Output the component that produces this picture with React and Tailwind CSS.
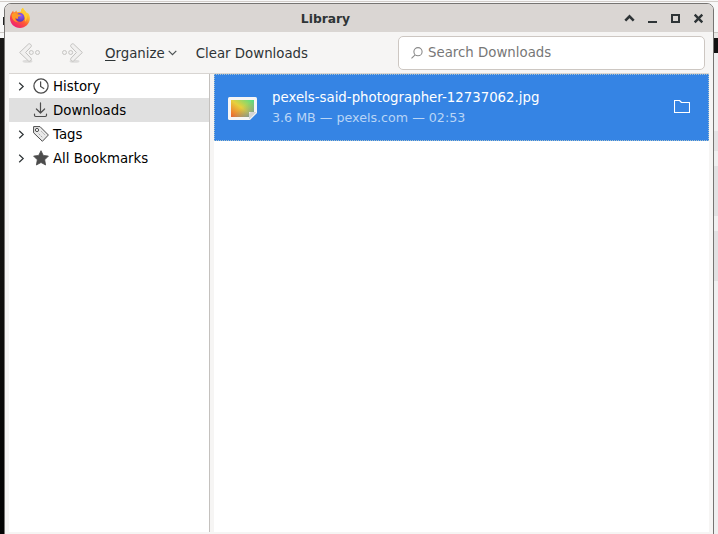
import React from 'react';

function Firefox() {
  return (
    <svg className="h-[22px] w-[22px] shrink-0" viewBox="0 0 22 22">
      <defs>
        <linearGradient id="fox" x1="0.85" y1="0.05" x2="0.2" y2="0.95">
          <stop offset="0" stopColor="#fff04a" />
          <stop offset="0.3" stopColor="#ffb52c" />
          <stop offset="0.58" stopColor="#ff5a35" />
          <stop offset="1" stopColor="#ed1c78" />
        </linearGradient>
        <radialGradient id="globe" cx="0.6" cy="0.3" r="0.7">
          <stop offset="0" stopColor="#9a5bf5" />
          <stop offset="1" stopColor="#5239b4" />
        </radialGradient>
      </defs>
      <path fill="url(#fox)" d="M2.9 5.2 4.2 3.6 4.7 5.5 6 5 7.4 3.4 8 5.3C9.6 4.6 11 4.5 12 4.8 11.8 3 12.5 1.5 14 .7 14.6 3 16.8 4 18 6.2L18.7 5.8C20.3 7.5 21 9.5 20.9 11.6 20.6 17 16.4 21 11 21 5.4 21 1 16.7 1 11.3 1 9 1.7 7 2.9 5.2Z" />
      <circle cx="11.1" cy="10.4" r="4.4" fill="url(#globe)" />
      <path fill="#ff9a26" d="M2.6 7.2C4.6 5.5 7.3 5.8 8.7 7.3L12 7.9C11.9 9 10.2 9.2 9.4 9.6 8.6 10.1 9 10.9 9.4 11.4 7.8 12.2 6.9 11.6 6.3 10.5 5.8 12.6 7.2 14.6 9.4 15.2 5 15.4 2.4 11.6 2.6 7.2Z" />
      <path fill="#ffcb35" d="M12.2 4.8C12.1 3.2 12.7 1.8 14 .7 14.4 3.2 17.4 4.5 18 8.2 18.3 11 17.5 13 16 14.7 16.7 11.5 15.7 8.3 12.2 4.8Z" />
    </svg>
  );
}

function NavArrow({ flip }) {
  return (
    <svg className={flip ? 'h-6 w-6 -scale-x-100' : 'h-6 w-6'} viewBox="0 0 24 24">
      <ellipse cx="9.5" cy="20.2" rx="5" ry="1.5" fill="#000" opacity="0.1" />
      <path d="M10.5 3 1.6 11.5 10.5 20Q11.8 20.7 12.8 19.5 13.9 18.4 13 17.2L7.6 11.5 13 5.8Q13.9 4.6 12.8 3.5 11.8 2.3 10.5 3Z" fill="#f1f0ef" stroke="#c3c2c0" />
      <circle cx="13.3" cy="11.5" r="2" fill="#f3f2f1" stroke="#c6c5c3" />
      <circle cx="19.5" cy="11.5" r="2" fill="#f3f2f1" stroke="#c6c5c3" />
    </svg>
  );
}

function HistoryIcon() {
  return (
    <svg className="h-4 w-4" viewBox="0 0 16 16" fill="none" stroke="#4c4c4c" strokeWidth="1.25" strokeLinecap="round">
      <circle cx="8" cy="8" r="7.1" />
      <path d="M7.6 3.8V8.4L10.8 10.5" />
    </svg>
  );
}

function DownloadIcon() {
  return (
    <svg className="h-4 w-4" viewBox="0 0 16 16" fill="none" stroke="#4c4c4c" strokeWidth="1.2" strokeLinecap="round" strokeLinejoin="round">
      <path d="M7.5 .8V10.8M3.4 7 7.5 11 11.6 7M1.5 12.2V13.3Q1.5 14.5 2.7 14.5H12.3Q13.5 14.5 13.5 13.3V12.2" />
    </svg>
  );
}

function TagIcon() {
  return (
    <svg className="h-4 w-4" viewBox="0 0 16 16" fill="#e9e9e9" stroke="#4c4c4c" strokeLinejoin="round">
      <path d="M.6 .6H7L15.4 9 9.4 15.3 .6 6.8Z" />
      <circle cx="4" cy="4" r="1.6" fill="white" />
      <path d="M8.2 5.2 12.5 9.5M5.7 7.7 9.6 11.6" stroke="#999" strokeWidth="0.8" strokeDasharray="2 1" />
    </svg>
  );
}

function StarIcon() {
  return (
    <svg className="h-4 w-4" viewBox="0 0 16 16" fill="#4c4c4c" stroke="#4c4c4c" strokeWidth="0.8" strokeLinejoin="round">
      <path d="M8 .7 10.3 5.4 15.4 6.1 11.7 9.8 12.6 15 8 12.5 3.4 15 4.3 9.8 .6 6.1 5.7 5.4Z" />
    </svg>
  );
}

function TreeRow({ label, icon, expandable = true, selected = false }) {
  return (
    <li className={selected ? 'flex h-6 items-center bg-[#e0e0e0] pl-[9px]' : 'flex h-6 items-center pl-[9px]'}>
      <span className="w-[15px]">
        {expandable && (
          <svg className="mt-px h-[9px] w-[7px]" viewBox="0 0 7 9" fill="none" stroke="#2e3436" strokeWidth="1.2">
            <path d="M1.2 .8 5.2 4.5 1.2 8.2" />
          </svg>
        )}
      </span>
      {icon}
      <span className="ml-1 pt-[2px] text-[13.33px] leading-6">{label}</span>
    </li>
  );
}

function WindowButtons() {
  return (
    <svg className="ml-auto h-4 w-[84px]" viewBox="0 0 84 16" fill="none" stroke="#2e3436">
      <path d="M1.3 10.6 5.5 6.4 9.7 10.6" strokeWidth="2.6" />
      <path d="M24 12H33" strokeWidth="2" />
      <path d="M48 5H55V12H48Z" strokeWidth="2" />
      <path d="M70.7 4.7 78.3 12.3M78.3 4.7 70.7 12.3" strokeWidth="2.4" />
    </svg>
  );
}

function ImageFile() {
  return (
    <svg className="mt-px h-[23px] w-[29px]" viewBox="0 0 29 23">
      <defs>
        <linearGradient id="photo" x1="0" y1="1" x2="1" y2="0">
          <stop offset="0" stopColor="#f0602b" />
          <stop offset="0.5" stopColor="#e8cf3c" />
          <stop offset="1" stopColor="#4be08a" />
        </linearGradient>
        <linearGradient id="shade" x1="0.45" y1="0.45" x2="1" y2="1">
          <stop offset="0" stopColor="#7f9f80" stopOpacity="0" />
          <stop offset="1" stopColor="#6591b0" />
        </linearGradient>
      </defs>
      <path d="M1.5 0H27.5Q29 0 29 1.5V16L22 23H1.5Q0 23 0 21.5V1.5Q0 0 1.5 0Z" fill="#f6f5f4" />
      <path d="M3 3H26V15H21V20H3Z" fill="url(#photo)" />
      <path d="M3 3H26V15H21V20H3Z" fill="url(#shade)" />
      <path d="M21 22.5V17Q21 15 23 15H28.5Z" fill="#d4d5d5" />
    </svg>
  );
}

function Toolbar() {
  return (
    <div className="flex h-[41px] shrink-0 items-center pr-[8px] pl-[13px] text-[13.33px] text-[#2e3436]">
      <NavArrow />
      <span className="ml-[18px] flex"><NavArrow flip /></span>
      <button className="ml-[21px] flex items-center pt-[2px]">
        <span><span className="underline underline-offset-2">O</span>rganize</span>
        <svg className="ml-[3px] h-[6px] w-[9px]" viewBox="0 0 9 6" fill="none" stroke="#4c5153" strokeWidth="1.2">
          <path d="M.7 .8 4.5 4.6 8.3 .8" />
        </svg>
      </button>
      <button className="ml-[19px] pt-[2px]">Clear Downloads</button>
      <div className="mt-px ml-auto flex h-[34px] w-[307px] items-center rounded-[5px] border border-[#cdc7c2] bg-white pl-[12px] text-[#777777]">
        <svg className="-mt-px h-[12px] w-[12px]" viewBox="0 0 12 12" fill="none" stroke="#8a8a8a" strokeWidth="1.1">
          <circle cx="7" cy="4.7" r="4.1" />
          <path d="M4.1 7.8.5 11.4" />
        </svg>
        <span className="ml-[5px] -mt-px">Search Downloads</span>
      </div>
    </div>
  );
}

function DownloadRow() {
  return (
    <div className="flex h-[67px] items-center border border-dotted border-[#a9c2cc] bg-[#3584e4] pr-[18px] pl-[13px] text-white">
      <ImageFile />
      <div className="ml-[15px]">
        <div className="text-[13.33px] leading-5">pexels-said-photographer-12737062.jpg</div>
        <div className="text-[12.67px] leading-5 text-[#b9d5f6]">3.6 MB — pexels.com — 02:53</div>
      </div>
      <svg className="-mt-[2px] ml-auto h-[14px] w-[16px]" viewBox="0 0 16 14" fill="none" stroke="white" strokeWidth="1.1" strokeLinejoin="round">
        <path d="M.5 .5H5.5L7.5 2.5H15.5V12.5H.5Z" />
      </svg>
    </div>
  );
}

export default function App() {
  return (
    <div className="relative h-[534px] w-[718px] overflow-hidden bg-[#f8f8f8] font-['DejaVu_Sans',sans-serif]">
      <div className="flex h-full flex-col">
        <div className="h-[33px] border-b border-[#cdc8c4] pt-px">
          <div className="h-px bg-[#d2cdc9]" />
          <div className="mt-[15px] ml-[3px] h-[8px] w-px bg-[#222222]" />
        </div>
        <div className="flex grow justify-between">
          <div className="mt-[5px] w-[6px] bg-gradient-to-b from-[#191817] via-[#11100e] to-[#030303]" />
          <div className="flex w-[6px] flex-col bg-[#f0f0f0]">
            <div className="h-[5px] bg-[#eae8e6]" />
            <div className="h-[15px] bg-[#111111]" />
            <div className="mt-[78px] h-[20px] bg-[#e4e3e4]" />
            <div className="mt-[15px] h-[50px] bg-[#e2e1e2]" />
            <div className="mt-[15px] h-[50px] bg-[#e2e1e2]" />
          </div>
        </div>
      </div>

      <div className="absolute top-[3px] left-[4px] flex h-[540px] w-[710px] flex-col overflow-hidden rounded-t-[7px] border border-[#767472] bg-[#f6f5f4]">
        <header className="relative flex h-[28px] shrink-0 items-center bg-[#dad6d3] pr-[5px] pl-[4px]">
          <Firefox />
          <h1 className="absolute inset-x-0 pt-[2px] pr-[67px] text-center text-[12.3px] leading-7 font-bold text-[#2e3436]">Library</h1>
          <WindowButtons />
        </header>
        <Toolbar />
        <main className="mx-[4px] flex h-[459px] shrink-0 border-t border-[#d8d5d2]">
          <ul className="w-[201px] border-r border-[#c4c1be] bg-white text-black">
            <TreeRow label="History" icon={<HistoryIcon />} />
            <TreeRow label="Downloads" icon={<DownloadIcon />} expandable={false} selected />
            <TreeRow label="Tags" icon={<TagIcon />} />
            <TreeRow label="All Bookmarks" icon={<StarIcon />} />
          </ul>
          <section className="ml-[4px] grow bg-white">
            <DownloadRow />
          </section>
        </main>
      </div>
    </div>
  );
}
